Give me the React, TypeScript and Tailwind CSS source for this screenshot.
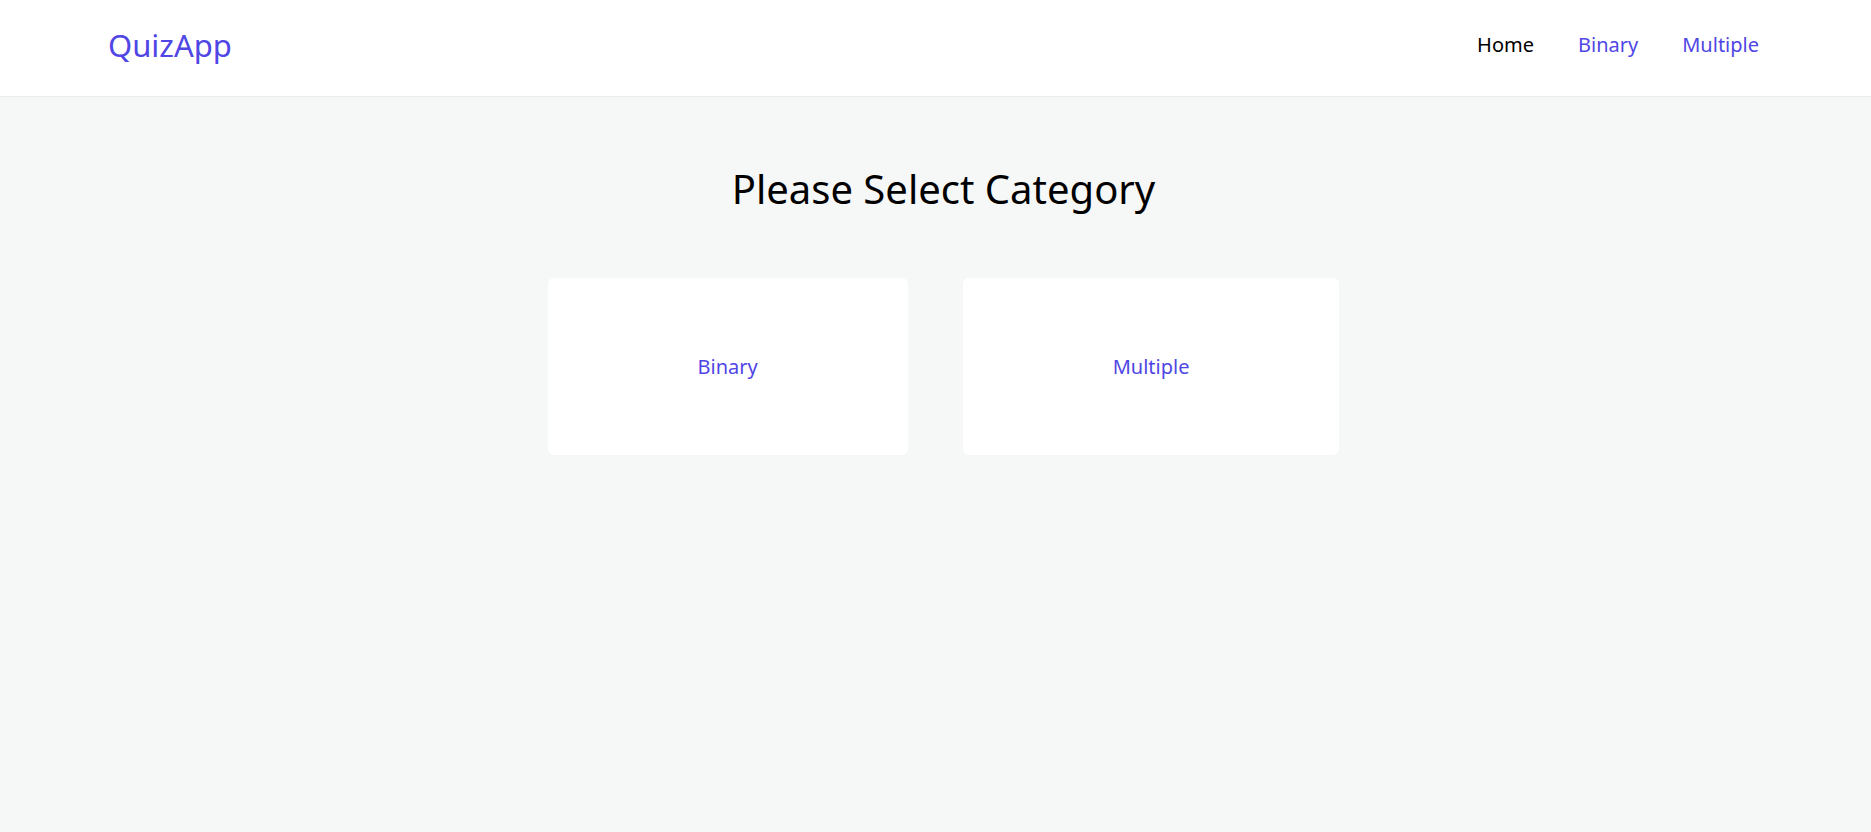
import React from "react";

export default function App() {
  return (
    <div className="min-h-[832px] bg-[#f6f7f7]" style={{ fontFamily: '"Noto Sans", "Open Sans", sans-serif' }}>
      <header className="h-[97px] bg-white border-b border-[#ececec] flex items-center justify-between pl-[108px] pr-[112px] pb-[6px]">
        <div className="text-[31px] text-[#4f46e5]">QuizApp</div>
        <nav className="flex items-center gap-[44px] text-[20px]">
          <a className="text-black">Home</a>
          <a className="text-[#4f46e5]">Binary</a>
          <a className="text-[#4f46e5]">Multiple</a>
        </nav>
      </header>
      <main className="flex flex-col items-center pl-[16px]">
        <h1 className="text-[40px] text-black mt-[60px] leading-[64px]">Please Select Category</h1>
        <div className="flex gap-[55px] mt-[57px]">
          <div className="bg-white rounded-[6px] px-[150px] h-[177px] flex items-center text-[20px] text-[#4f46e5]">Binary</div>
          <div className="bg-white rounded-[6px] px-[150px] h-[177px] flex items-center text-[20px] text-[#4f46e5]">Multiple</div>
        </div>
      </main>
    </div>
  );
}
